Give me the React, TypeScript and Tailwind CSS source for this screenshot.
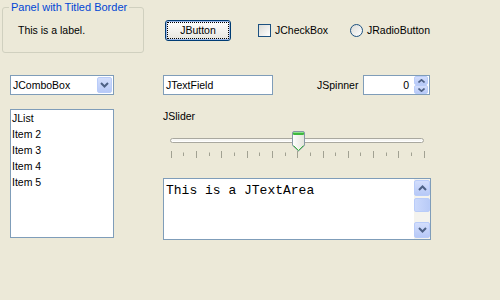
import { Fragment } from 'react'

const ticks = Array.from({ length: 21 }, (_, i) => i)

function Chevron({ up = false }: { up?: boolean }) {
  return (
    <svg width="9" height="6" viewBox="0 0 9 6">
      <path
        d={up ? 'M1 5 L4.5 1.5 L8 5' : 'M1 1 L4.5 4.5 L8 1'}
        fill="none"
        stroke="#4D6185"
        strokeWidth="2"
      />
    </svg>
  )
}

function Slider() {
  // thumb sits in the middle of the track, over tick 10
  return (
    <svg width="268" height="32" viewBox="0 0 268 32" className="block">
      <defs>
        <linearGradient id="thumb" x1="0" y1="0" x2="1" y2="0">
          <stop offset="0" stopColor="#FFFFFF" />
          <stop offset="1" stopColor="#E3E3DB" />
        </linearGradient>
      </defs>
      <rect x="7.5" y="9.5" width="253" height="4" rx="2" fill="#F7F7F4" stroke="#A9A89F" />
      <line x1="9" y1="12.5" x2="259" y2="12.5" stroke="#FFFFFF" />
      {ticks.map((i) => {
        const x = Math.round(7.7 + i * 12.65) + 0.5
        const long = i % 2 === 0
        return (
          <line
            key={i}
            x1={x}
            x2={x}
            y1={long ? 22 : 23.5}
            y2={long ? 29 : 27}
            stroke="#A1A192"
          />
        )
      })}
      <g transform="translate(129.5 2.5)">
        <path
          d="M1.5 0 H10.5 Q12 0 12 1.5 V14 L6 19.5 L0 14 V1.5 Q0 0 1.5 0 Z"
          fill="url(#thumb)"
          stroke="#8798A6"
        />
        <rect x="0.5" y="0.5" width="11" height="3" rx="1" fill="#3FB83F" />
        <line x1="1" y1="1" x2="11" y2="1" stroke="#8EE08E" />
        <path d="M1 14 L6 19" stroke="#3FB83F" />
        <path d="M11 14 L6 19" stroke="#3FB83F" />
      </g>
    </svg>
  )
}

export default function App() {
  return (
    <div className="w-[500px] h-[300px] bg-[#ECE9D8] text-black text-[10.5px] leading-[13px] font-['Liberation_Sans',Arial,sans-serif] overflow-hidden">
      {/* top row */}
      <div className="flex items-start h-[75px]">
        <fieldset className="ml-[2px] mt-[1px] w-[142px] h-[52px] border border-[#D0D0BF] rounded-[3px] pl-[6px] pt-0">
          <legend className="px-[2px] text-[#0046D5] text-[11px] leading-[12px]">Panel with Titled Border</legend>
          <div className="pl-[9px] pt-[11px]">This is a label.</div>
        </fieldset>

        <div className="ml-[21px] mt-[20px] flex items-center h-[21px]">
          <button className="w-[66px] h-[21px] rounded-[3px] border border-[#003C74] bg-gradient-to-b from-white to-[#E6E5DE] p-[1px] shadow-[inset_0_0_0_1px_#9DB9EB]">
            <span className="flex h-full w-full items-center justify-center border border-dotted border-black">
              JButton
            </span>
          </button>

          <span className="ml-[27px] w-[13px] h-[13px] border border-[#1C5180] bg-gradient-to-br from-[#DCDCD7] to-white" />
          <span className="ml-[4px] w-[75px]">JCheckBox</span>

          <span className="w-[13px] h-[13px] rounded-full border border-[#1C5180] bg-gradient-to-br from-[#DCDCD7] to-white" />
          <span className="ml-[4px]">JRadioButton</span>
        </div>
      </div>

      {/* second row */}
      <div className="flex items-center h-[20px]">
        <div className="ml-[10px] w-[104px] h-[20px] border border-[#7F9DB9] bg-white flex items-center">
          <span className="pl-[2px] flex-1">JComboBox</span>
          <span className="mr-[1px] w-[15px] h-[16px] rounded-[2px] border border-[#B9CCF9] bg-gradient-to-b from-[#D3DEFC] to-[#B7C9F7] flex items-center justify-center">
            <Chevron />
          </span>
        </div>

        <div className="ml-[49px] w-[110px] h-[20px] border border-[#7F9DB9] bg-white flex items-center pl-[2px]">
          JTextField
        </div>

        <span className="ml-[44px] w-[46px]">JSpinner</span>

        <div className="w-[67px] h-[20px] border border-[#7F9DB9] bg-white flex items-center">
          <span className="flex-1 text-right pr-[5px]">0</span>
          <div className="flex flex-col mr-[1px] h-[18px]">
            {[true, false].map((up) => (
              <Fragment key={String(up)}>
                <span className="w-[14px] h-[9px] rounded-[2px] border border-[#B9CCF9] bg-gradient-to-b from-[#D3DEFC] to-[#B7C9F7] flex items-center justify-center">
                  <svg width="7" height="4" viewBox="0 0 7 4">
                    <path d={up ? 'M0.5 3.5 L3.5 0.8 L6.5 3.5' : 'M0.5 0.5 L3.5 3.2 L6.5 0.5'} fill="none" stroke="#4D6185" strokeWidth="1.6" />
                  </svg>
                </span>
              </Fragment>
            ))}
          </div>
        </div>
      </div>

      {/* third row */}
      <div className="flex items-start mt-[14px]">
        <div className="ml-[10px] w-[104px] h-[129px] border border-[#7F9DB9] bg-white leading-[16px] pl-[1px]">
          <div>JList</div>
          <div>Item 2</div>
          <div>Item 3</div>
          <div>Item 4</div>
          <div>Item 5</div>
        </div>

        <div className="ml-[49px] w-[268px] flex flex-col">
          <div className="pt-[1px]">JSlider</div>
          <div className="mt-[6px]">
            <Slider />
          </div>
          <div className="mt-[17px] h-[62px] border border-[#7F9DB9] bg-white flex">
            <div className="flex-1 pl-[2px] pt-[4px] font-['Liberation_Mono','Courier_New',monospace] text-[13px] leading-[15px]">
              This is a JTextArea
            </div>
            <div className="w-[16px] bg-[#F4F3EE] flex flex-col">
              <span className="mt-[1px] h-[16px] rounded-[2px] border border-[#B9CCF9] bg-gradient-to-b from-[#D3DEFC] to-[#B7C9F7] flex items-center justify-center">
                <Chevron up />
              </span>
              <span className="mt-[2px] h-[14px] rounded-[2px] border border-[#B9CCF9] bg-gradient-to-r from-[#CBD9FC] to-[#B9CBF7]" />
              <span className="flex-1" />
              <span className="mb-[1px] h-[16px] rounded-[2px] border border-[#B9CCF9] bg-gradient-to-b from-[#D3DEFC] to-[#B7C9F7] flex items-center justify-center">
                <Chevron />
              </span>
            </div>
          </div>
        </div>
      </div>
    </div>
  )
}
